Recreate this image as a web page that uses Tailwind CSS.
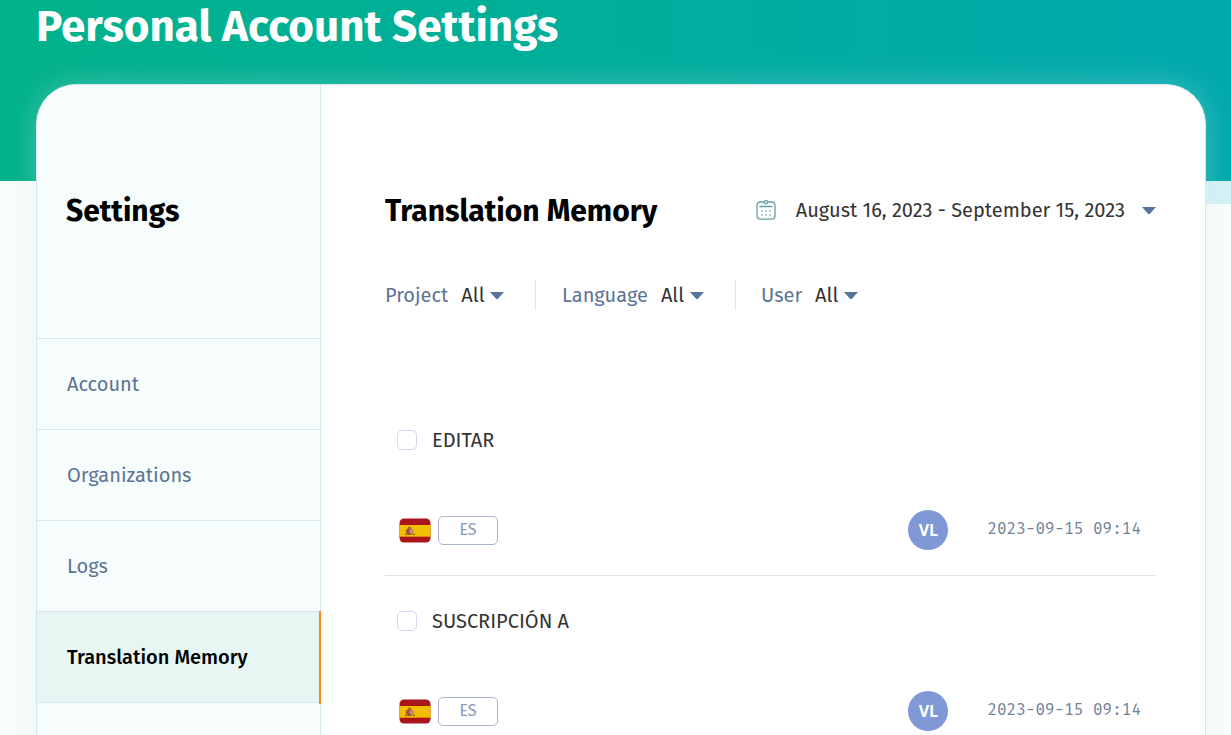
<!DOCTYPE html>
<html lang="en">
<head>
<meta charset="utf-8">
<meta name="viewport" content="width=device-width, initial-scale=1">
<title>Personal Account Settings</title>
<script src="https://cdn.jsdelivr.net/npm/@tailwindcss/browser@4"></script>
</head>
<body class="relative h-screen overflow-hidden bg-[#f8fdf9] font-['Fira_Sans','Noto_Sans',sans-serif] text-xl text-[#333]">
<svg class="hidden" aria-hidden="true">
  <symbol id="caret" viewBox="0 0 14 7"><path d="M0 0h14L8.200 6.400q-1.200 1-2.400 0z" fill="#56749b"/></symbol>
  <symbol id="spain" viewBox="0 0 32 25">
    <rect x=".5" y=".5" width="31" height="24" rx="4.500" fill="#aa151b"/>
    <path d="M.5 7h31v11.500H.5z" fill="#f1bf00"/>
    <path d="M.5 18h31v1H.5z" fill="#d88a08"/>
    <path d="M6.500 11.500h1.200v5H6.500zM14 11.500h1.200v5H14z" fill="#c9a06a"/>
    <circle cx="10.500" cy="13.500" r="3.600" fill="#b0562c"/>
    <path d="M11 11.500h2.500v3.500H11z" fill="#b9a095"/>
    <path d="M9 10q0-1.500 1.500-1.500T12 10z" fill="#b45a20"/>
    <path d="M6 16h2v1H6zM9 15h2v2H9zM14 16h2v1h-2z" fill="#8a5a35"/>
  </symbol>
</svg>
<header class="h-[181px] bg-linear-to-r from-[#02b28a] to-[#00a9ad] px-9">
  <h1 class="text-[44px] leading-[54px] font-bold text-white">Personal Account Settings</h1>
</header>
<div class="absolute top-[181px] right-0 h-[23px] w-8 bg-[#d3f1f4]"></div>
<main class="relative -mt-[97px] mr-[25px] ml-9 flex min-h-screen overflow-visible rounded-t-[40px] border border-[#d3e7ed] bg-white shadow-[0_0_30px_rgba(215,225,240,0.3)]">
  <aside class="w-[284px] shrink-0 rounded-tl-[39px] border-r border-[#d3e7ed] bg-[#f7fdfd]">
    <h2 class="h-[253px] px-[29px] pt-[106px] text-3xl leading-10 font-bold text-black">Settings</h2>
    <nav class="text-[#5d7494]">
      <a href="#account" class="flex h-[91px] items-center border-t border-[#d3e7ed] px-[30px]">Account</a>
      <a href="#organizations" class="flex h-[91px] items-center border-t border-[#d3e7ed] px-[30px]">Organizations</a>
      <a href="#logs" class="flex h-[91px] items-center border-t border-[#d3e7ed] px-[30px]">Logs</a>
      <a href="#memory" aria-current="page" class="relative flex h-[91px] items-center border-t border-[#d3e7ed] bg-[#e8f6f3] px-[30px] font-medium text-black">Translation Memory<span class="absolute -top-px -right-px h-[93px] w-[2px] bg-[#ff8719]"></span></a>
      <div class="h-[91px] border-t border-[#d3e7ed]"></div>
    </nav>
  </aside>
  <section class="min-w-0 flex-1 pt-[106px] pr-[49px] pl-16">
    <div class="flex h-10 items-center justify-between">
      <h2 class="text-3xl leading-10 font-bold whitespace-nowrap text-black">Translation Memory</h2>
      <button type="button" class="flex h-10 items-center pb-[2px] whitespace-nowrap">
        <svg class="mr-5 size-5" viewBox="0 0 20 20" fill="none" stroke="#669f9e" stroke-width="1.300" stroke-linecap="round">
          <path d="M7.500 2h-3Q1 2 1 5.500v10Q1 19.200 4.500 19.200h11q3.500 0 3.500-3.700v-10Q19 2 15.500 2h-3M4 6.500h12"/>
          <circle cx="10" cy="2.200" r="1.600"/>
          <path d="M6 11h.1M10 11h.1M14 11h.1M6 15h.1M10 15h.1M14 15h.1" stroke-width="1.600"/>
        </svg>
        <span>August 16, 2023 - September 15, 2023</span>
        <svg class="ml-[17px] h-[7px] w-[14px]"><use href="#caret"/></svg>
      </button>
    </div>
    <form class="mt-12 flex h-[32px] items-center">
      <div class="flex h-[30px] w-[151px] items-center border-r border-[#d3e7ed]">
        <label for="project" class="mr-[13px] text-[#5d7494]">Project</label>
        <div class="relative flex items-center"><select id="project" class="w-[43px] appearance-none bg-transparent"><option>All</option></select><svg class="pointer-events-none absolute right-0 h-[7px] w-[14px]"><use href="#caret"/></svg></div>
      </div>
      <div class="flex h-[30px] w-[200px] items-center border-r border-[#d3e7ed] pl-[26px]">
        <label for="language" class="mr-[13px] text-[#5d7494]">Language</label>
        <div class="relative flex items-center"><select id="language" class="w-[43px] appearance-none bg-transparent"><option>All</option></select><svg class="pointer-events-none absolute right-0 h-[7px] w-[14px]"><use href="#caret"/></svg></div>
      </div>
      <div class="flex h-[30px] items-center pl-[25px]">
        <label for="user" class="mr-[13px] text-[#5d7494]">User</label>
        <div class="relative flex items-center"><select id="user" class="w-[43px] appearance-none bg-transparent"><option>All</option></select><svg class="pointer-events-none absolute right-0 h-[7px] w-[14px]"><use href="#caret"/></svg></div>
      </div>
    </form>
    <ul class="mt-[84px]">
      <li class="h-[181px] border-b border-[#d9e3ea] pt-[30px]">
        <div class="flex h-[30px] items-center pl-3">
          <input id="editar" type="checkbox" class="mr-[15px] size-5 appearance-none rounded-[5px] border border-[#d8d4ee] bg-white">
          <label for="editar">EDITAR</label>
        </div>
        <div class="mt-[55px] flex h-10 items-center pr-[15px] pl-[14px]">
          <svg class="mr-[7px] h-[25px] w-8" role="img" aria-label="Spain"><use href="#spain"/></svg>
          <span class="flex h-[29px] w-[60px] items-center justify-center rounded-[5px] border border-[#a9b7ce] text-base text-[#879bb6]">ES</span>
          <span class="ml-auto flex size-10 items-center justify-center rounded-full bg-[#8099d6] font-['Open_Sans',sans-serif] text-base font-bold text-white">VL</span>
          <time class="ml-[39px] pb-[2px] font-['Fira_Mono','Liberation_Mono',monospace] text-base whitespace-nowrap text-[#718096]">2023-09-15 09:14</time>
        </div>
      </li>
      <li class="h-[181px] border-b border-[#d9e3ea] pt-[30px]">
        <div class="flex h-[30px] items-center pl-3">
          <input id="suscripcion" type="checkbox" class="mr-[15px] size-5 appearance-none rounded-[5px] border border-[#d8d4ee] bg-white">
          <label for="suscripcion">SUSCRIPCIÓN A</label>
        </div>
        <div class="mt-[55px] flex h-10 items-center pr-[15px] pl-[14px]">
          <svg class="mr-[7px] h-[25px] w-8" role="img" aria-label="Spain"><use href="#spain"/></svg>
          <span class="flex h-[29px] w-[60px] items-center justify-center rounded-[5px] border border-[#a9b7ce] text-base text-[#879bb6]">ES</span>
          <span class="ml-auto flex size-10 items-center justify-center rounded-full bg-[#8099d6] font-['Open_Sans',sans-serif] text-base font-bold text-white">VL</span>
          <time class="ml-[39px] pb-[2px] font-['Fira_Mono','Liberation_Mono',monospace] text-base whitespace-nowrap text-[#718096]">2023-09-15 09:14</time>
        </div>
      </li>
    </ul>
  </section>
</main>
</body>
</html>
